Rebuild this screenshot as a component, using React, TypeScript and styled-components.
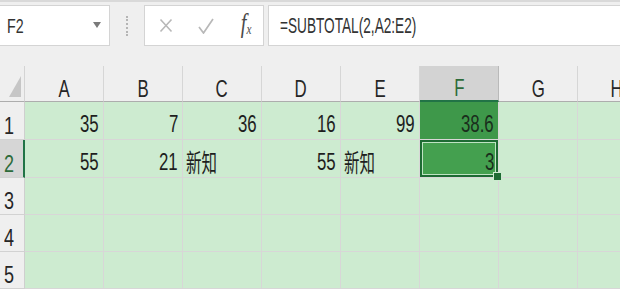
import React from "react";
import styled, { createGlobalStyle } from "styled-components";

const GlobalStyle = createGlobalStyle`
  html, body {
    margin: 0;
    padding: 0;
    background: #efefef;
    overflow: hidden;
  }
  body {
    font-family: "Liberation Sans", Arial, sans-serif;
    color: #222;
  }
`;

// --- formula bar ---

const Page = styled.div`
  width: 620px;
  height: 289px;
  display: flex;
  flex-direction: column;
  overflow: hidden;
  background: #efefef;
  border-top: 2px solid #d9d9d9;
  box-sizing: border-box;
`;

const Toolbar = styled.div`
  display: flex;
  align-items: stretch;
  height: 51px;
  margin-top: 3px;
  margin-bottom: 20px;
`;

const Box = styled.div<{ $w?: number }>`
  display: flex;
  align-items: center;
  background: #ffffff;
  border: 1px solid #d4d4d4;
  box-sizing: border-box;
  ${(p) => (p.$w ? `width: ${p.$w}px;` : "flex: 1;")}
`;

const NameBox = styled(Box)`
  border-left: none;
  padding: 0 8px 0 7px;
  justify-content: space-between;
`;

const Arrow = styled.span`
  width: 0;
  height: 0;
  border-left: 4px solid transparent;
  border-right: 4px solid transparent;
  border-top: 6px solid #7a7a7a;
  margin-top: -2px;
`;

const Grip = styled.div`
  width: 34px;
  display: flex;
  align-items: center;
  justify-content: center;
`;

const Dots = styled.span`
  width: 0;
  height: 20px;
  border-left: 2px dotted #b5b5b5;
`;

const IconBox = styled(Box)`
  padding: 0 10px 0 14px;
  justify-content: space-between;
  margin-right: 4px;
`;

const Fx = styled.span`
  font-family: "Liberation Serif", "Times New Roman", serif;
  font-style: italic;
  font-size: 27px;
  line-height: 1;
  color: #4a4a4a;
  display: inline-block;
  transform: scaleX(0.75);
  margin-top: -4px;
  sub {
    font-size: 15px;
    vertical-align: -2px;
  }
`;

const FormulaBox = styled(Box)`
  border-right: none;
  padding-left: 11px;
`;

const Squish = styled.span<{ $sx: number; $size: number; $origin?: string; $cjk?: boolean }>`
  display: inline-block;
  white-space: nowrap;
  line-height: 1;
  font-size: ${(p) => p.$size}px;
  font-family: ${(p) =>
    p.$cjk
      ? `"Noto Sans CJK SC", "Liberation Sans", sans-serif`
      : `"Liberation Sans", Arial, sans-serif`};
  transform: scaleX(${(p) => p.$sx});
  transform-origin: ${(p) => p.$origin || "left"};
`;

// --- sheet ---

const Sheet = styled.div`
  flex: 1;
  display: grid;
  grid-template-columns: 25px repeat(8, 79px);
  grid-template-rows: 36px 38px 38px 37px 37px 37px;
  background: #cdebd0;
  width: max-content;
`;

const Corner = styled.div`
  background: #efefef;
  border-right: 1px solid #d4d4d4;
  border-bottom: 1px solid #adadad;
  display: flex;
  align-items: flex-end;
  justify-content: flex-end;
  padding: 0 3px 4px 0;
`;

const ColHead = styled.div<{ $active?: boolean }>`
  background: ${(p) => (p.$active ? "#d3d3d3" : "#efefef")};
  border-right: 1px solid ${(p) => (p.$active ? "#b9b9b9" : "#d6d6d6")};
  border-bottom: ${(p) => (p.$active ? "2px solid #217346" : "1px solid #adadad")};
  color: ${(p) => (p.$active ? "#2d6b3a" : "#262626")};
  display: flex;
  align-items: flex-end;
  justify-content: center;
  padding-bottom: 0;
  overflow: hidden;
`;

const RowHead = styled.div<{ $active?: boolean }>`
  background: ${(p) => (p.$active ? "#d6d6d6" : "#efefef")};
  border-bottom: 1px solid #d2d2d2;
  border-right: ${(p) => (p.$active ? "2px solid #217346" : "1px solid #cfcfcf")};
  color: ${(p) => (p.$active ? "#2d6b3a" : "#262626")};
  display: flex;
  align-items: flex-end;
  padding: 0 0 1px 4px;
  overflow: hidden;
`;

const Cell = styled.div<{ $align: "left" | "right"; $fill?: "range" | "active" }>`
  position: relative;
  border-right: 1px solid #d8d6d7;
  border-bottom: 1px solid #d8d6d7;
  display: flex;
  align-items: flex-end;
  justify-content: ${(p) => (p.$align === "right" ? "flex-end" : "flex-start")};
  padding: 0 4px 3px 3px;
  box-sizing: border-box;
  background: ${(p) =>
    p.$fill === "range" ? "#3e984a" : p.$fill === "active" ? "#44a04f" : "transparent"};
  box-shadow: ${(p) =>
    p.$fill === "active" ? "inset 0 0 0 2px #1d6b33, inset 0 0 0 3px #bfe3c3" : "none"};
  color: ${(p) => (p.$fill ? "#1a2e1c" : "#1e1e1e")};
  overflow: visible;
`;

const Handle = styled.span`
  position: absolute;
  right: -4px;
  bottom: -4px;
  width: 7px;
  height: 7px;
  background: #1d6b33;
  border: 1px solid #cdebd0;
  z-index: 2;
`;

type CellData = { v: string; cjk?: boolean };

const columns = ["A", "B", "C", "D", "E", "F", "G", "H"];

const rows: CellData[][] = [
  [{ v: "35" }, { v: "7" }, { v: "36" }, { v: "16" }, { v: "99" }, { v: "38.6" }, { v: "" }, { v: "" }],
  [{ v: "55" }, { v: "21" }, { v: "新知", cjk: true }, { v: "55" }, { v: "新知", cjk: true }, { v: "3" }, { v: "" }, { v: "" }],
  [],
  [],
  [],
];

const XIcon = () => (
  <svg width="14" height="15" viewBox="0 0 14 15">
    <path d="M1.5 1.5 L12.5 13.5 M12.5 1.5 L1.5 13.5" stroke="#b8b8b8" strokeWidth="1.6" fill="none" />
  </svg>
);

const CheckIcon = () => (
  <svg width="16" height="16" viewBox="0 0 16 16">
    <path d="M1 9 L5.5 15 L15 1" stroke="#b8b8b8" strokeWidth="1.7" fill="none" />
  </svg>
);

const CornerMark = () => (
  <svg width="12" height="21" viewBox="0 0 12 21">
    <polygon points="12,0 12,21 0,21" fill="#c6c6c6" />
  </svg>
);

const App: React.FC = () => {
  return (
    <>
      <GlobalStyle />
      <Page>
        <Toolbar>
          <NameBox $w={110}>
            <Squish $sx={0.68} $size={21} style={{ color: "#333" }}>
              F2
            </Squish>
            <Arrow />
          </NameBox>
          <Grip>
            <Dots />
          </Grip>
          <IconBox $w={120}>
            <XIcon />
            <CheckIcon />
            <Fx>
              f<sub>x</sub>
            </Fx>
          </IconBox>
          <FormulaBox>
            <Squish $sx={0.62} $size={22} style={{ color: "#333" }}>
              =SUBTOTAL(2,A2:E2)
            </Squish>
          </FormulaBox>
        </Toolbar>

        <Sheet>
          <Corner>
            <CornerMark />
          </Corner>
          {columns.map((c) => (
            <ColHead key={c} $active={c === "F"}>
              <Squish $sx={0.7} $size={24} $origin="center">
                {c}
              </Squish>
            </ColHead>
          ))}

          {rows.map((row, r) => (
            <React.Fragment key={r}>
              <RowHead $active={r === 1}>
                <Squish $sx={0.75} $size={24}>
                  {r + 1}
                </Squish>
              </RowHead>
              {columns.map((c, ci) => {
                const cell = row[ci] || { v: "" };
                const fill = c === "F" ? (r === 0 ? "range" : r === 1 ? "active" : undefined) : undefined;
                return (
                  <Cell key={c} $align={cell.cjk ? "left" : "right"} $fill={fill}>
                    {cell.v && (
                      <Squish
                        $sx={cell.cjk ? 0.62 : 0.7}
                        $size={cell.cjk ? 25 : 24}
                        $cjk={cell.cjk}
                        $origin={cell.cjk ? "left" : "right"}
                      >
                        {cell.v}
                      </Squish>
                    )}
                    {fill === "active" && <Handle />}
                  </Cell>
                );
              })}
            </React.Fragment>
          ))}
        </Sheet>
      </Page>
    </>
  );
};

export default App;
